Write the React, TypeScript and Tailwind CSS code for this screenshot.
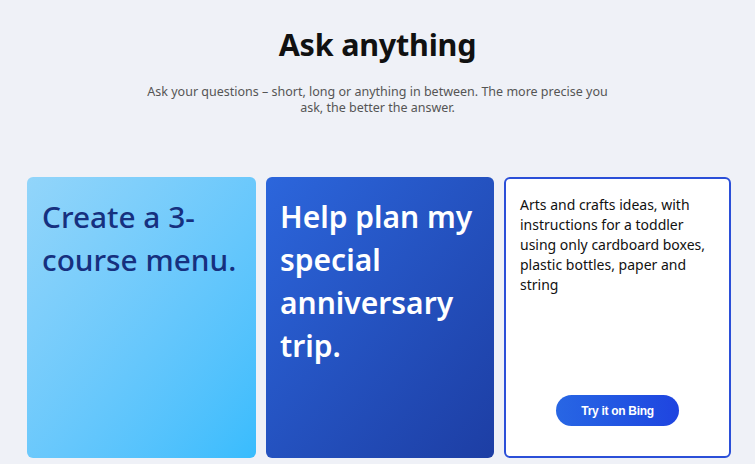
import React from "react";

export default function App() {
  return (
    <div
      className="w-[755px] h-[464px] overflow-hidden bg-[#eff1f7]"
      style={{ fontFamily: "'Noto Sans', 'Open Sans', sans-serif" }}
    >
      <div className="flex flex-col items-center pt-[24px]">
        <h1 className="text-[30.5px] leading-[40px] font-bold text-[#111111] tracking-[-0.2px]">
          Ask anything
        </h1>
        <p className="mt-[20px] w-[470px] text-center text-[12.5px] leading-[16px] text-[#555555]">
          Ask your questions – short, long or anything in between. The more precise you ask, the better the answer.
        </p>
      </div>
      <div className="mt-[61px] ml-[27px] flex gap-[10px]">
        <div className="w-[229px] h-[281px] rounded-[6px] bg-gradient-to-br from-[#92d5fa] to-[#38bcfd] px-[15px] pt-[18px]">
          <p className="text-[29.8px] leading-[43px] font-medium text-[#16307f]">
            Create a 3-course menu.
          </p>
        </div>
        <div className="w-[228px] h-[281px] rounded-[6px] bg-gradient-to-br from-[#2c66dc] to-[#1d3ea4] px-[14px] pt-[18px]">
          <p className="text-[30px] leading-[43px] font-semibold text-white">
            Help plan my special anniversary trip.
          </p>
        </div>
        <div className="w-[227px] h-[281px] rounded-[6px] border-2 border-[#2b4fd8] bg-white flex flex-col px-[14px] pt-[16px] pb-[30px]">
          <p className="text-[14px] leading-[20px] text-[#111111]">
            Arts and crafts ideas, with instructions for a toddler using only cardboard boxes, plastic bottles, paper and string
          </p>
          <div className="mt-auto flex justify-center">
            <button
              className="w-[123px] h-[31px] rounded-full bg-gradient-to-r from-[#2866e4] to-[#1f44e0] text-white text-[12px] font-bold tracking-[-0.3px]"
              style={{ fontFamily: "'Liberation Sans', Arial, sans-serif" }}
            >
              Try it on Bing
            </button>
          </div>
        </div>
      </div>
    </div>
  );
}
